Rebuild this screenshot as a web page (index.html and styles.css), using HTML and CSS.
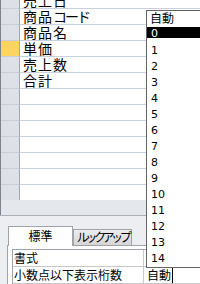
FILE: index.html
```html
<!DOCTYPE html>
<html lang="ja">
<head>
<meta charset="utf-8">
<link rel="stylesheet" href="styles.css">
</head>
<body>
<div class="sheet">
  <div class="rows">
    <div class="row"><div class="selector"></div><div class="field">売上日</div></div>
    <div class="row"><div class="selector"></div><div class="field">商品<span class="kana">コード</span></div></div>
    <div class="row"><div class="selector"></div><div class="field">商品名</div></div>
    <div class="row"><div class="selector current"></div><div class="field">単価</div></div>
    <div class="row"><div class="selector"></div><div class="field">売上数</div></div>
    <div class="row"><div class="selector"></div><div class="field">合計</div></div>
    <div class="row"><div class="selector"></div><div class="field"></div></div>
    <div class="row"><div class="selector"></div><div class="field"></div></div>
    <div class="row"><div class="selector"></div><div class="field"></div></div>
    <div class="row"><div class="selector"></div><div class="field"></div></div>
    <div class="row"><div class="selector"></div><div class="field"></div></div>
    <div class="row"><div class="selector"></div><div class="field"></div></div>
    <div class="row"><div class="selector"></div><div class="field"></div></div>
  </div>
</div>
<div class="sheet-foot"></div>
<div class="panel">
  <div class="tabs">
    <div class="tab active">標準</div>
    <div class="tab"><span class="kana-tab">ルックアップ</span></div>
  </div>
  <div class="page">
    <div class="grid">
      <div class="prow"><div class="pname">書式</div><div class="pval"></div></div>
      <div class="prow"><div class="pname">小数点以下表示桁数</div><div class="pval">自動<span class="caret"></span></div></div>
    </div>
  </div>
</div>
<ul class="dropdown">
  <li class="item auto">自動</li>
  <li class="item"><span class="hl">0</span></li>
  <li class="item">1</li>
  <li class="item">2</li>
  <li class="item">3</li>
  <li class="item">4</li>
  <li class="item">5</li>
  <li class="item">6</li>
  <li class="item">7</li>
  <li class="item">8</li>
  <li class="item">9</li>
  <li class="item">10</li>
  <li class="item">11</li>
  <li class="item">12</li>
  <li class="item">13</li>
  <li class="item">14</li>
</ul>
</body>
</html>
```

FILE: styles.css
```css
* { box-sizing: border-box; margin: 0; padding: 0; }
html, body { width: 200px; height: 284px; overflow: hidden; }
body {
  position: relative;
  background: #fff;
  color: #000;
  font-family: "Noto Sans CJK JP", "DejaVu Sans", sans-serif;
}

/* datasheet */
.sheet {
  height: 200px;
  overflow: hidden;
  border-left: 1px solid #7d848e;
}
.rows { margin-top: -7px; }
.row { display: flex; height: 16px; }
.selector {
  flex: none;
  width: 19px;
  background: #dde1e7;
  border-right: 1px solid #a3a7ad;
  border-bottom: 1px solid #c9ced6;
}
.selector.current { background: #fdd462; }
.field {
  flex: 1;
  border-bottom: 1px solid #c8d0dd;
  padding-left: 3px;
  font-size: 14px;
  line-height: 15px;
  letter-spacing: 1px;
  white-space: nowrap;
}
.kana { letter-spacing: -2px; }

.sheet-foot {
  height: 15px;
  background: #e4e7eb;
  border-left: 1px solid #7d848e;
}

/* property sheet */
.panel {
  height: 69px;
  border-top: 1px solid #aab0b8;
  background: #eceef1;
  padding: 10px 0 0 7px;
}
.tabs {
  display: flex;
  align-items: flex-end;
  height: 19px;
  padding-left: 1px;
}
.tab {
  width: 59px;
  height: 16px;
  border: 1px solid #a0a4aa;
  border-bottom: none;
  background: linear-gradient(#ececec, #d6d6d6);
  font-size: 12px;
  line-height: 14px;
  text-align: center;
  white-space: nowrap;
}
.tab.active {
  width: 65px;
  height: 20px;
  margin-bottom: -1px;
  position: relative;
  z-index: 1;
  background: #fff;
  line-height: 15px;
  padding-top: 1px;
}
.kana-tab { letter-spacing: -3.4px; }
.page {
  height: 40px;
  background: #fff;
  border-left: 1px solid #a0a4aa;
  border-top: 1px solid #a0a4aa;
  padding: 3px 0 0 4px;
}
.grid {
  border-top: 1px solid #a0a4aa;
  border-left: 1px solid #a0a4aa;
}
.prow {
  display: flex;
  height: 17px;
  border-bottom: 1px solid #c8c8c8;
  font-size: 12px;
  line-height: 16px;
  white-space: nowrap;
}
.pname {
  flex: none;
  width: 131px;
  padding-left: 1px;
  border-right: 1px solid #c8c8c8;
}
.pval { flex: 1; padding-left: 3px; }
.caret {
  display: inline-block;
  width: 1px;
  height: 16px;
  margin-left: 1px;
  vertical-align: top;
  background: #000;
}

/* dropdown list */
.dropdown {
  position: absolute;
  left: 146px;
  top: 10px;
  width: 60px;
  list-style: none;
  background: #fff;
  border: 1px solid #646464;
  z-index: 5;
}
.item {
  height: 16px;
  padding-left: 4px;
  font-family: "DejaVu Sans", sans-serif;
  font-size: 11px;
  line-height: 16px;
}
.item.auto {
  font-family: "Noto Sans CJK JP", sans-serif;
  font-size: 12px;
  line-height: 13px;
  padding-left: 3px;
}
.item .hl {
  display: block;
  height: 11px;
  margin-left: -4px;
  padding-left: 4px;
  padding-top: 1px;
  line-height: 11px;
  background: #000;
  color: #fff;
}
```
